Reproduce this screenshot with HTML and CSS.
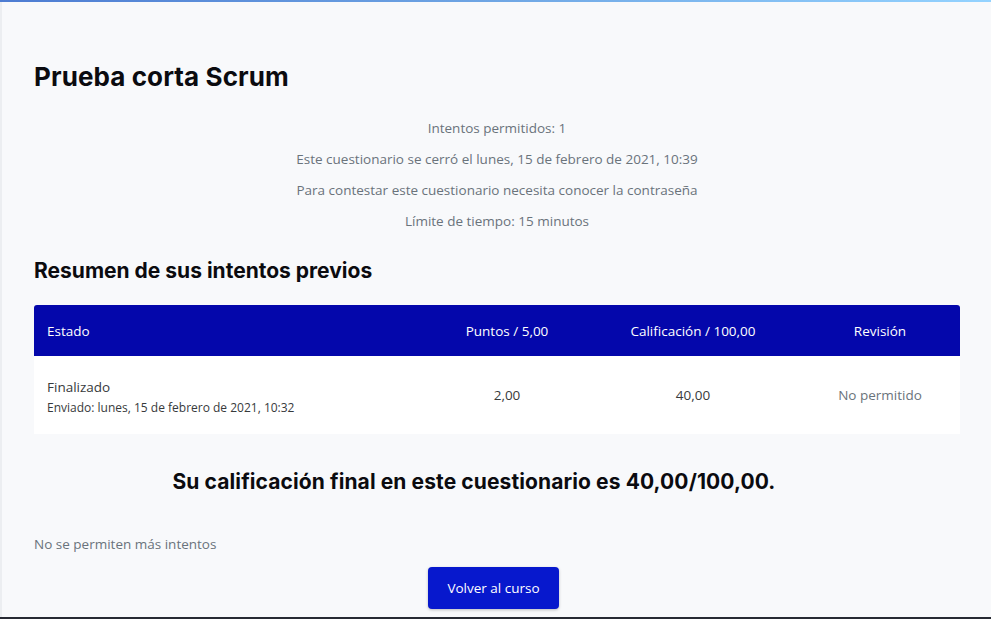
FILE: index.html
```html
<!DOCTYPE html>
<html lang="es">
<head>
<meta charset="utf-8">
<title>Prueba corta Scrum</title>
<link rel="stylesheet" href="styles.css">
</head>
<body>
<div class="topbar"></div>
<main class="page">
  <h2 class="title">Prueba corta Scrum</h2>
  <div class="info">
    <p>Intentos permitidos: 1</p>
    <p>Este cuestionario se cerró el lunes, 15 de febrero de 2021, 10:39</p>
    <p>Para contestar este cuestionario necesita conocer la contraseña</p>
    <p>Límite de tiempo: 15 minutos</p>
  </div>
  <h3 class="subtitle">Resumen de sus intentos previos</h3>
  <table class="attempts">
    <thead>
      <tr>
        <th class="c-state">Estado</th>
        <th class="c-points">Puntos / 5,00</th>
        <th class="c-grade">Calificación / 100,00</th>
        <th class="c-review">Revisión</th>
      </tr>
    </thead>
    <tbody>
      <tr>
        <td class="c-state">Finalizado<span class="sub">Enviado: lunes, 15 de febrero de 2021, 10:32</span></td>
        <td class="c-points">2,00</td>
        <td class="c-grade">40,00</td>
        <td class="c-review muted">No permitido</td>
      </tr>
    </tbody>
  </table>
  <h3 class="final">Su calificación final en este cuestionario es 40,00/100,00.</h3>
  <p class="nomore">No se permiten más intentos</p>
  <div class="actions"><button class="btn">Volver al curso</button></div>
</main>
<footer class="footer"></footer>
</body>
</html>
```
FILE: styles.css
```css
html, body {
  margin: 0;
  padding: 0;
  background: #fff;
}
body {
  font-family: "Open Sans", "Liberation Sans", sans-serif;
  font-size: 13.5px;
  color: #373a3c;
}
.topbar {
  height: 2px;
  background: linear-gradient(90deg, #4d7cd2 0%, #6fa6e4 50%, #94d3ff 100%);
}
.page {
  background: #f8f9fb;
  border-left: 2px solid #eceef1;
  padding: 59px 31px 8px 32px;
  display: flex;
  flex-direction: column;
}
.title {
  font-family: "Inter", "Liberation Sans", sans-serif;
  font-weight: 700;
  font-size: 26px;
  line-height: 31px;
  letter-spacing: 0.1px;
  margin: 0;
  color: #0b0b0f;
}
.info {
  margin-top: 26px;
  text-align: center;
  color: #6a737b;
}
.info p {
  margin: 0 0 10px;
  line-height: 21px;
}
.subtitle {
  font-family: "Inter", "Liberation Sans", sans-serif;
  font-weight: 700;
  font-size: 21px;
  line-height: 24px;
  margin: 17px 0 22px;
  color: #0b0b0f;
}
.attempts {
  width: 926px;
  border-collapse: collapse;
  table-layout: fixed;
}
.attempts th {
  background: #0407ab;
  color: #fff;
  font-weight: 400;
  height: 51px;
  padding: 0 13px;
  text-align: center;
}
.attempts th:first-child { border-top-left-radius: 3px; text-align: left; }
.attempts th:last-child { border-top-right-radius: 3px; }
.attempts td {
  background: #fff;
  height: 78px;
  padding: 0 13px;
  text-align: center;
  vertical-align: middle;
}
.attempts td.c-state {
  text-align: left;
  line-height: 21px;
  height: 74px;
  padding-top: 4px;
}
.c-state { width: 368px; }
.c-points { width: 132px; }
.c-grade { width: 188px; }
.c-review { width: 134px; }
.sub {
  display: block;
  font-size: 12px;
  line-height: 20px;
}
.muted { color: #6a737b; }
.final {
  font-family: "Inter", "Liberation Sans", sans-serif;
  font-weight: 700;
  font-size: 21px;
  line-height: 24px;
  letter-spacing: 0.1px;
  margin: 36px 0 0;
  padding-right: 46px;
  text-align: center;
  color: #0b0b0f;
}
.nomore {
  margin: 40px 0 0;
  line-height: 21px;
  color: #6a737b;
}
.actions {
  display: flex;
  justify-content: center;
  margin-top: 12px;
  padding-right: 7px;
}
.btn {
  font-family: "Open Sans", "Liberation Sans", sans-serif;
  font-size: 13.5px;
  color: #fff;
  background: #0718cd;
  border: none;
  border-radius: 4px;
  width: 131px;
  height: 42px;
  box-shadow: 0 1px 3px rgba(0, 0, 0, 0.25);
  padding: 0;
}
.footer {
  border-top: 2px solid #272a33;
  background: #fff;
  height: 40px;
}
```
